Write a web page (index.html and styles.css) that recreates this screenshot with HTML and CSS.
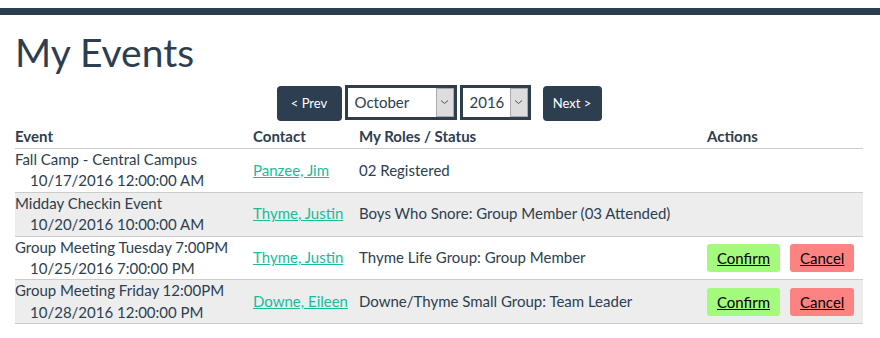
FILE: index.html
```html
<!DOCTYPE html>
<html lang="en">
<head>
  <meta charset="UTF-8">
  <title>My Events</title>
  <link rel="stylesheet" href="styles.css">
</head>
<body>
  <div class="topbar"></div>
  <div class="container">
    <h1>My Events</h1>

    <div class="pager">
      <button class="nav-btn prev">&lt; Prev</button>
      <div class="picker month">
        <span class="picker-value">October</span>
        <span class="picker-arrow"><svg width="9" height="6" viewBox="0 0 9 6"><path d="M1 1.5 L4.5 4.5 L8 1.5" fill="none" stroke="#555" stroke-width="1"/></svg></span>
      </div>
      <div class="picker year">
        <span class="picker-value">2016</span>
        <span class="picker-arrow"><svg width="9" height="6" viewBox="0 0 9 6"><path d="M1 1.5 L4.5 4.5 L8 1.5" fill="none" stroke="#555" stroke-width="1"/></svg></span>
      </div>
      <button class="nav-btn next">Next &gt;</button>
    </div>

    <table class="events">
      <colgroup>
        <col class="col-event">
        <col class="col-contact">
        <col class="col-roles">
        <col>
      </colgroup>
      <thead>
        <tr>
          <th>Event</th>
          <th>Contact</th>
          <th>My Roles / Status</th>
          <th>Actions</th>
        </tr>
      </thead>
      <tbody>
        <tr>
          <td>Fall Camp - Central Campus<br><span class="date">10/17/2016 12:00:00 AM</span></td>
          <td><a href="#">Panzee, Jim</a></td>
          <td>02 Registered</td>
          <td></td>
        </tr>
        <tr class="alt">
          <td>Midday Checkin Event<br><span class="date">10/20/2016 10:00:00 AM</span></td>
          <td><a href="#">Thyme, Justin</a></td>
          <td>Boys Who Snore: Group Member (03 Attended)</td>
          <td></td>
        </tr>
        <tr>
          <td>Group Meeting Tuesday 7:00PM<br><span class="date">10/25/2016 7:00:00 PM</span></td>
          <td><a href="#">Thyme, Justin</a></td>
          <td>Thyme Life Group: Group Member</td>
          <td class="actions"><a href="#" class="btn confirm">Confirm</a><a href="#" class="btn cancel">Cancel</a></td>
        </tr>
        <tr class="alt">
          <td>Group Meeting Friday 12:00PM<br><span class="date">10/28/2016 12:00:00 PM</span></td>
          <td><a href="#">Downe, Eileen</a></td>
          <td>Downe/Thyme Small Group: Team Leader</td>
          <td class="actions"><a href="#" class="btn confirm">Confirm</a><a href="#" class="btn cancel">Cancel</a></td>
        </tr>
      </tbody>
    </table>
  </div>
</body>
</html>
```

FILE: styles.css
```css
body {
  margin: 0;
  padding-top: 8px;
  font-family: Lato, 'Open Sans', sans-serif;
  font-size: 15px;
  color: #2c3e50;
  background: #fff;
}
.topbar {
  height: 7px;
  background-color: #2c3e50;
}
.container {
  padding: 0 17px 0 15px;
}
h1 {
  font-size: 39px;
  font-weight: 400;
  line-height: 1.1;
  margin: 16px 0 0 0;
}
.pager {
  display: flex;
  justify-content: center;
  align-items: center;
  margin-top: 10px;
}
.nav-btn {
  height: 35px;
  border: none;
  border-radius: 4px;
  background-color: #2c3e50;
  color: #fff;
  font-family: Lato, sans-serif;
  font-size: 13px;
  padding: 0;
  white-space: nowrap;
  margin-top: 2px;
}
.prev {
  width: 65px;
  margin-right: 3px;
}
.next {
  width: 59px;
  margin-left: 12px;
}
.picker {
  display: flex;
  height: 35px;
  box-sizing: border-box;
  border: 3px solid #2c3e50;
  background: #fff;
}
.month {
  width: 112px;
}
.year {
  width: 71px;
  margin-left: 3px;
}
.picker-value {
  flex: 1;
  font-size: 15px;
  line-height: 29px;
  padding-left: 7px;
  color: #2c3e50;
}
.picker-arrow {
  width: 16px;
  background: #dddddd;
  border: 1px solid #aaa;
  display: flex;
  align-items: center;
  justify-content: center;
}
.events {
  width: 100%;
  border-collapse: collapse;
  margin-top: 5px;
}
.col-event {
  width: 238px;
}
.col-contact {
  width: 106px;
}
.col-roles {
  width: 348px;
}
th {
  text-align: left;
  font-weight: 700;
  line-height: 21px;
  padding: 0 0 1px;
  border-bottom: 1px solid #cccccc;
}
td {
  line-height: 1.428571;
  padding: 0;
  vertical-align: middle;
  border-bottom: 1px solid #cccccc;
}
.alt td {
  background-color: #ededed;
}
.date {
  padding-left: 15px;
}
a {
  color: #18bc9c;
}
.actions {
  white-space: nowrap;
}
.btn {
  display: inline-block;
  color: #000;
  text-decoration: underline;
  padding: 3px 10px;
  border-radius: 3px;
  line-height: 22px;
}
.confirm {
  background-color: #a3fa7c;
}
.cancel {
  background-color: #fd8383;
  margin-left: 10px;
}
```
